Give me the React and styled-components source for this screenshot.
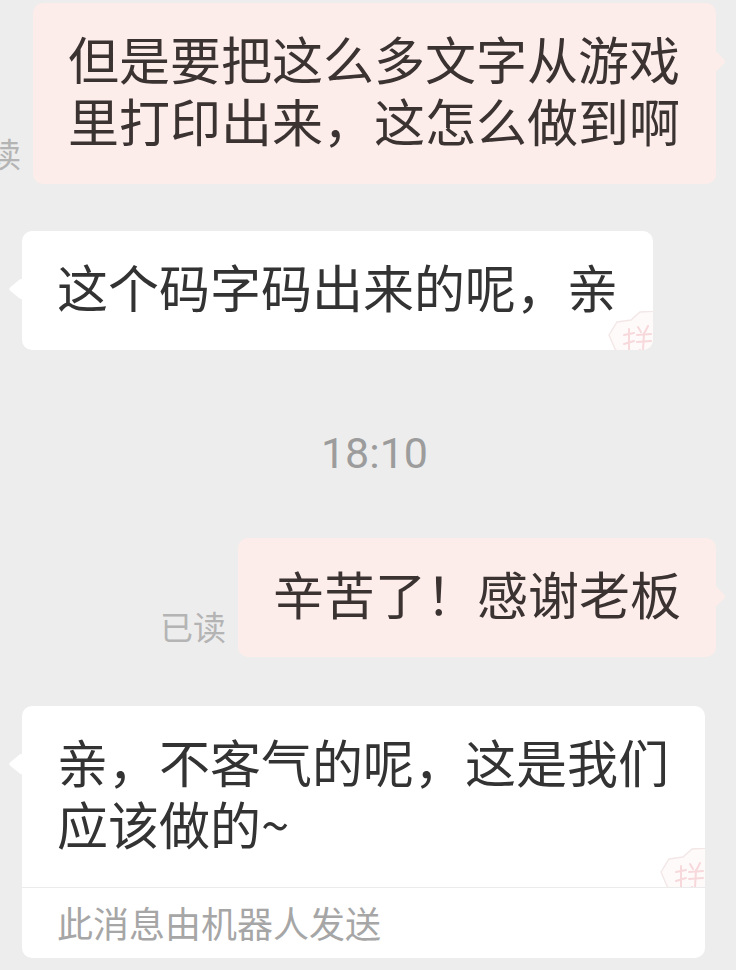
import React from "react";
import styled, { createGlobalStyle } from "styled-components";

const Global = createGlobalStyle`
  html, body {
    margin: 0;
    padding: 0;
    background: #ededed;
  }
  body {
    font-family: "Noto Sans CJK SC", "Noto Sans", sans-serif;
  }
`;

const Page = styled.div`
  width: 736px;
  height: 970px;
  overflow: hidden;
  box-sizing: border-box;
  padding-top: 3px;
  background: #ededed;
  display: flex;
  flex-direction: column;
`;

const Row = styled.div`
  display: flex;
  align-items: flex-end;
  justify-content: ${(p) => (p.$out ? "flex-end" : "flex-start")};
  gap: 12px;
  padding: ${(p) => (p.$out ? "0 20px 0 0" : "0 0 0 22px")};
  margin-top: ${(p) => p.$mt || 0}px;
`;

const Status = styled.span`
  flex-shrink: 0;
  white-space: nowrap;
  font-size: 33px;
  line-height: 33px;
  color: #b4b4b4;
  margin-bottom: 14px;
`;

const BubbleWrap = styled.div`
  position: relative;
  flex-shrink: 0;
  max-width: 683px;

  &::before {
    content: "";
    position: absolute;
    top: ${(p) => (p.$out ? 51 : 50)}px;
    ${(p) => (p.$out ? "right: -7px;" : "left: -8px;")}
    width: ${(p) => (p.$out ? 15 : 16)}px;
    height: ${(p) => (p.$out ? 15 : 16)}px;
    border-radius: 3px;
    background: ${(p) => (p.$out ? "#fdedea" : "#ffffff")};
    transform: scaleX(${(p) => (p.$out ? 1 : 1.24)}) rotate(45deg);
  }
`;

const Bubble = styled.div`
  border-radius: 10px;
  overflow: hidden;
  background: ${(p) => (p.$out ? "#fdedea" : "#ffffff")};
`;

const Body = styled.div`
  position: relative;
  overflow: hidden;
  padding: 24px 35px 33px;
  font-size: 51px;
  line-height: 62px;
  color: ${(p) => (p.$out ? "#3a3332" : "#333333")};
`;

const Footer = styled.div`
  border-top: 1px solid #ebebeb;
  padding: 0 35px;
  height: 70px;
  line-height: 68px;
  font-size: 36px;
  color: #a6a6a6;
  white-space: nowrap;
`;

const Time = styled.div`
  margin-top: 78px;
  margin-bottom: 60px;
  padding-left: 13px;
  text-align: center;
  font-family: Roboto, "Liberation Sans", sans-serif;
  font-size: 43px;
  line-height: 50px;
  color: #9c9c9c;
`;

const Mark = styled.svg`
  position: absolute;
  right: 0;
  bottom: -7px;
  width: 46px;
  height: 46px;
  pointer-events: none;
  opacity: 0.8;
`;

function Watermark() {
  return (
    <Mark viewBox="0 0 46 46">
      <polygon
        points="2,24 10,11 24,9 33,1 50,0 56,20 48,46 20,52 8,38"
        fill="rgba(255,244,244,0.5)"
        stroke="#f1e2e2"
        strokeWidth="1.4"
      />
      <g stroke="#f6cfd3" strokeWidth="2" strokeLinecap="round" fill="none">
        <line x1="22" y1="18" x2="22" y2="40" />
        <line x1="17" y1="24" x2="27" y2="22" />
        <line x1="17" y1="33" x2="27" y2="30" />
        <line x1="31" y1="16" x2="34" y2="21" />
        <line x1="41" y1="15" x2="38" y2="21" />
        <line x1="30" y1="24" x2="44" y2="23" />
        <line x1="30" y1="31" x2="44" y2="30" />
        <line x1="37" y1="22" x2="36" y2="40" />
        <line x1="33" y1="39" x2="30" y2="42" />
      </g>
    </Mark>
  );
}

function Outgoing({ mt, text }) {
  return (
    <Row $out $mt={mt}>
      <Status>已读</Status>
      <BubbleWrap $out>
        <Bubble $out>
          <Body $out>{text}</Body>
        </Bubble>
      </BubbleWrap>
    </Row>
  );
}

function Incoming({ mt, text, footer }) {
  return (
    <Row $mt={mt}>
      <BubbleWrap>
        <Bubble>
          <Body>
            {text}
            <Watermark />
          </Body>
          {footer && <Footer>{footer}</Footer>}
        </Bubble>
      </BubbleWrap>
    </Row>
  );
}

export default function App() {
  return (
    <>
      <Global />
      <Page>
        <Outgoing text="但是要把这么多文字从游戏里打印出来，这怎么做到啊" />
        <Incoming mt={47} text="这个码字码出来的呢，亲" />
        <Time>18:10</Time>
        <Outgoing text="辛苦了！感谢老板" />
        <Incoming
          mt={49}
          text="亲，不客气的呢，这是我们应该做的~"
          footer="此消息由机器人发送"
        />
      </Page>
    </>
  );
}
